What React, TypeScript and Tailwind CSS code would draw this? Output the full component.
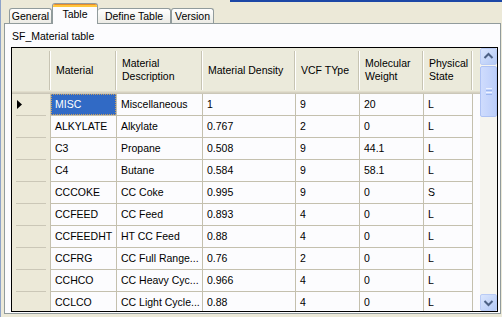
import React from "react";

const cols = [
  { w: "w-[66px]", h: ["Material"] },
  { w: "w-[86px]", h: ["Material", "Description"] },
  { w: "w-[93px]", h: ["Material Density"] },
  { w: "w-[64px]", h: ["VCF TYpe"] },
  { w: "w-[64px]", h: ["Molecular", "Weight"] },
  { w: "w-[49px]", h: ["Physical", "State"] },
];

const rows = [
  ["MISC", "Miscellaneous", "1", "9", "20", "L"],
  ["ALKYLATE", "Alkylate", "0.767", "2", "0", "L"],
  ["C3", "Propane", "0.508", "9", "44.1", "L"],
  ["C4", "Butane", "0.584", "9", "58.1", "L"],
  ["CCCOKE", "CC Coke", "0.995", "9", "0", "S"],
  ["CCFEED", "CC Feed", "0.893", "4", "0", "L"],
  ["CCFEEDHT", "HT CC Feed", "0.88", "4", "0", "L"],
  ["CCFRG", "CC Full Range...", "0.76", "2", "0", "L"],
  ["CCHCO", "CC Heavy Cyc...", "0.966", "4", "0", "L"],
  ["CCLCO", "CC Light Cycle...", "0.88", "4", "0", "L"],
];

const headerShadow =
  "shadow-[inset_0_-1px_#cbc7b8,inset_0_-2px_#d6d2c2,inset_0_-3px_#e2decd]";

function HeaderSep() {
  return (
    <div className="w-[2px] self-stretch mt-[3px] mb-[4px] flex shrink-0">
      <div className="w-px bg-[#c7c4b3]" />
      <div className="w-px bg-white" />
    </div>
  );
}

function Chevron({ down }: { down?: boolean }) {
  return (
    <svg width="15" height="15" viewBox="0 0 15 15">
      <polyline
        points={down ? "3.5,6 7.5,10 11.5,6" : "3.5,9 7.5,5 11.5,9"}
        fill="none"
        stroke="#4d6185"
        strokeWidth="2"
      />
    </svg>
  );
}

function ScrollButton({ down }: { down?: boolean }) {
  return (
    <div className="h-[17px] w-[17px] rounded-[2px] border border-[#b9cbf5] bg-gradient-to-br from-[#dbe6fd] to-[#b4c9f6] flex items-center justify-center">
      <Chevron down={down} />
    </div>
  );
}

export default function App() {
  return (
    <div className="w-[502px] h-[317px] bg-[#ece9d8] flex overflow-hidden font-['Liberation_Sans',Arial,sans-serif] text-[10.5px] text-black">
      <div className="w-px bg-[#8ea3c9] shrink-0" />
      <div className="flex-1 flex flex-col">
        <div className="h-[2px] flex">
          <div className="w-[229px]" />
          <div className="flex-1 bg-[#1c47a6]" />
        </div>
        {/* tabs */}
        <div className="h-[21px] flex items-end pl-[8px]">
          <div className="w-[43px] h-[15px] border border-b-0 border-[#919b9c] rounded-t-[3px] bg-gradient-to-b from-white to-[#ecebe5] flex items-center justify-center leading-none">
            General
          </div>
          <div className="relative z-10 -mb-px w-[46px] h-[21px] border border-b-0 border-[#919b9c] rounded-t-[3px] bg-[#fcfcfe] flex flex-col overflow-hidden">
            <div className="h-[1px] bg-[#e68b2c]" />
            <div className="h-[2px] bg-[#ffc73c]" />
            <div className="flex-1 flex items-center justify-center leading-none pb-[3px]">
              Table
            </div>
          </div>
          <div className="w-[73px] h-[15px] border border-b-0 border-l-0 border-[#919b9c] rounded-t-[3px] bg-gradient-to-b from-white to-[#ecebe5] flex items-center justify-center leading-none">
            Define Table
          </div>
          <div className="w-[43px] h-[15px] border border-b-0 border-[#919b9c] rounded-t-[3px] bg-gradient-to-b from-white to-[#ecebe5] flex items-center justify-center leading-none">
            Version
          </div>
        </div>
        {/* panel */}
        <div className="ml-[3px] w-[497px] h-[291px] border border-[#919b9c] bg-[#fcfcfe] flex flex-col pl-[6px]">
          <div className="mt-[6px] ml-[1px] h-[13px] leading-[13px]">SF_Material table</div>
          <div className="mt-[4px] w-[487px] h-[265px] border border-black flex">
            {/* table */}
            <div className="w-[468px] flex flex-col overflow-hidden">
              <div className={`h-[46px] flex shrink-0 bg-[#ebeadb] ${headerShadow}`}>
                <div className="w-[39px] flex">
                  <div className="flex-1" />
                  <HeaderSep />
                </div>
                {cols.map((c, i) => (
                  <div key={i} className={`${c.w} flex`}>
                    <div className="flex-1 flex flex-col justify-center pl-[5px] pb-[2px] leading-[13px] whitespace-nowrap overflow-hidden">
                      {c.h.map((t, j) => (
                        <div key={j}>{t}</div>
                      ))}
                    </div>
                    <HeaderSep />
                  </div>
                ))}
                <div className="flex-1" />
              </div>
              {rows.map((r, ri) => (
                <div key={ri} className="h-[22px] flex shrink-0">
                  <div className="w-[39px] h-[22px] bg-[#ece9d8] border-r border-[#c4c0ae] flex flex-col">
                    <div className="flex-1 flex items-center pl-[5px]">
                      {ri === 0 && (
                        <svg width="5" height="9" viewBox="0 0 5 9">
                          <polygon points="0,0 5,4.5 0,9" fill="#000" />
                        </svg>
                      )}
                    </div>
                    <div className="mx-[4px] h-px bg-[#cbc7b7]" />
                  </div>
                  {cols.map((c, ci) => {
                    const sel = ri === 0 && ci === 0;
                    return (
                      <div
                        key={ci}
                        className={`${c.w} h-[22px] border-r border-b border-[#c4c0ae] flex items-center whitespace-nowrap overflow-hidden`}
                      >
                        {sel ? (
                          <div className="w-full h-full bg-[#316ac5] text-white flex items-center pl-[4px] outline-1 outline-dotted outline-[#c9a062] -outline-offset-1">
                            {r[ci]}
                          </div>
                        ) : (
                          <div className="pl-[4px]">{r[ci]}</div>
                        )}
                      </div>
                    );
                  })}
                  <div className="flex-1" />
                </div>
              ))}
            </div>
            {/* scrollbar */}
            <div className="w-[17px] flex flex-col bg-[#f5f4ef]">
              <ScrollButton />
              <div className="mt-px h-[51px] rounded-[2px] border border-[#aec2f4] bg-gradient-to-r from-[#cfdcfd] to-[#bccefa] flex flex-col items-center justify-center gap-[1px]">
                <div className="w-[6px] h-px bg-[#eef3fe]" />
                <div className="w-[6px] h-px bg-[#9bb6f0]" />
                <div className="w-[6px] h-px bg-[#eef3fe]" />
                <div className="w-[6px] h-px bg-[#9bb6f0]" />
              </div>
              <div className="flex-1" />
              <ScrollButton down />
            </div>
          </div>
        </div>
      </div>
    </div>
  );
}
